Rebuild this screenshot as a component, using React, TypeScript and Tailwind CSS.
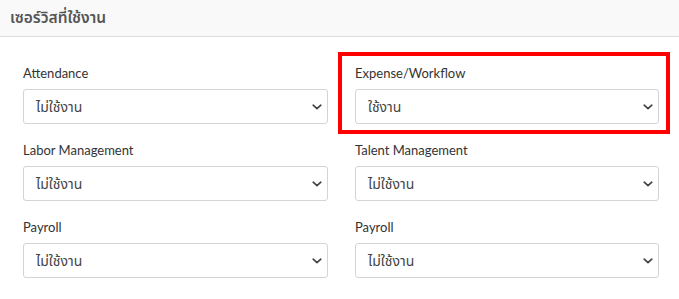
import React from 'react'

interface ServiceField {
  label: string
  value: string
  highlighted?: boolean
}

const fields: ServiceField[] = [
  { label: 'Attendance', value: 'ไม่ใช้งาน' },
  { label: 'Expense/Workflow', value: 'ใช้งาน', highlighted: true },
  { label: 'Labor Management', value: 'ไม่ใช้งาน' },
  { label: 'Talent Management', value: 'ไม่ใช้งาน' },
  { label: 'Payroll', value: 'ไม่ใช้งาน' },
  { label: 'Payroll', value: 'ไม่ใช้งาน' },
]

const Chevron = () => (
  <svg width="10" height="6" viewBox="0 0 10 6" fill="none" className="shrink-0">
    <path d="M1.2 1.2l3.8 3.4 3.8-3.4" stroke="#444" strokeWidth="1.7" strokeLinecap="round" strokeLinejoin="round" />
  </svg>
)

const SelectBox: React.FC<{ value: string }> = ({ value }) => (
  <div className="flex h-[35px] items-center justify-between rounded-[3px] border border-[#d4d4d4] bg-white pl-[12px] pr-[5px]">
    <span className="text-[14px] text-[#444]">{value}</span>
    <Chevron />
  </div>
)

export default function App() {
  return (
    <div
      className="h-[299px] w-[679px] overflow-hidden bg-white"
      style={{ fontFamily: 'Lato, "Noto Sans Thai", "Noto Sans", sans-serif' }}
    >
      {/* Header */}
      <div className="flex h-[37px] items-center border-b border-[#dcdcdc] bg-[#f9f9f9] px-[10px]">
        <h2 className="text-[15.5px] font-semibold text-[#555]">เซอร์วิสที่ใช้งาน</h2>
      </div>

      {/* Fields */}
      <div className="grid grid-cols-[305px_304px] gap-x-[27px] gap-y-[16px] pl-[23px] pt-[26px]">
        {fields.map((field, i) => (
          <div key={i} className="relative">
            {field.highlighted && (
              <div className="pointer-events-none absolute -bottom-[10px] -left-[17px] -right-[11px] -top-[11px] border-[4px] border-[#ff0000]" />
            )}
            <p className="mb-[6px] h-[20px] text-[13px] leading-[20px] text-[#333]">{field.label}</p>
            <SelectBox value={field.value} />
          </div>
        ))}
      </div>
    </div>
  )
}
